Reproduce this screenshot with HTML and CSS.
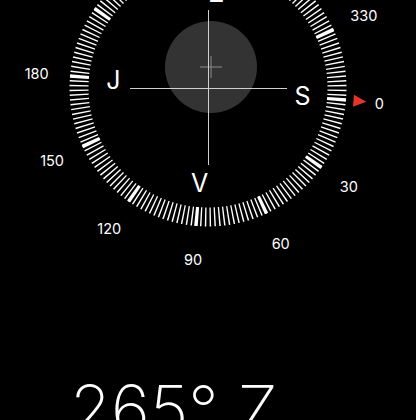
FILE: index.html
```html
<!DOCTYPE html>
<html lang="cs">
<head>
    <meta charset="UTF-8">
    <meta name="viewport" content="width=device-width, initial-scale=1.0">
    <title>Kompas</title>
    <link rel="stylesheet" href="styles.css">
</head>
<body>
    <main class="compass">
        <svg class="dial" width="416" height="300" viewBox="0 0 416 300">
            <!-- bearing bubble -->
            <circle class="bubble" cx="211" cy="67" r="46"/>
            <line class="cross-small" x1="200" y1="67" x2="222" y2="67"/>
            <line class="cross-small" x1="211" y1="56" x2="211" y2="78"/>

            <!-- crosshair -->
            <line class="cross" x1="208.5" y1="10" x2="208.5" y2="165"/>
            <line class="cross" x1="130" y1="88.5" x2="287" y2="88.5"/>

            <!-- tick ring, rotated so 0 sits 5deg below 3 o'clock -->
            <g transform="rotate(5 208 88)">
                <circle class="ticks" cx="208" cy="88" r="129" pathLength="360"/>
                <circle class="ticks-major" cx="208" cy="88" r="129" pathLength="360"/>
                <polygon class="north" points="354,82 354,94 367,88"/>
            </g>

            <!-- cardinal letters -->
            <text class="cardinal" x="302.6" y="96.3">S</text>
            <text class="cardinal" x="199.7" y="182.6">V</text>
            <text class="cardinal" x="113.4" y="79.7">J</text>
            <text class="cardinal" x="216.3" y="-6.6">Z</text>

            <!-- degree labels -->
            <text class="deg" x="379.3" y="103">0</text>
            <text class="deg" x="348.9" y="186.7">30</text>
            <text class="deg" x="280.7" y="243.9">60</text>
            <text class="deg" x="193" y="259.3">90</text>
            <text class="deg" x="109.3" y="228.9">120</text>
            <text class="deg" x="52.1" y="160.7">150</text>
            <text class="deg" x="36.7" y="73">180</text>
            <text class="deg" x="363.9" y="15.3">330</text>
        </svg>

        <div class="heading">265° Z</div>
    </main>
</body>
</html>
```
FILE: styles.css
```css
html, body {
    margin: 0;
    padding: 0;
    background: #000;
    height: 100%;
    overflow: hidden;
}
body {
    font-family: Inter, "Noto Sans", "DejaVu Sans", sans-serif;
    color: #fff;
}
.compass {
    display: flex;
    flex-direction: column;
}
.dial {
    display: block;
}
.bubble {
    fill: #333333;
}
.cross-small {
    stroke: #8a8a8a;
    stroke-width: 1;
}
.cross {
    stroke: #d0d0d0;
    stroke-width: 1;
}
.ticks {
    fill: none;
    stroke: #fff;
    stroke-width: 19;
    stroke-dasharray: 0.62 1.38;
    stroke-dashoffset: 0.31;
}
.ticks-major {
    fill: none;
    stroke: #fff;
    stroke-width: 19;
    stroke-dasharray: 1.5 28.5;
    stroke-dashoffset: 0.75;
}
.north {
    fill: #e2352b;
}
.cardinal {
    fill: #fff;
    font-size: 25px;
    text-anchor: middle;
    dominant-baseline: central;
}
.deg {
    fill: #fff;
    font-size: 14.5px;
    text-anchor: middle;
    dominant-baseline: central;
}
.heading {
    margin-top: 76px;
    padding-left: 70px;
    font-size: 66.5px;
    font-weight: 170;
    line-height: 1;
    white-space: nowrap;
}
```
